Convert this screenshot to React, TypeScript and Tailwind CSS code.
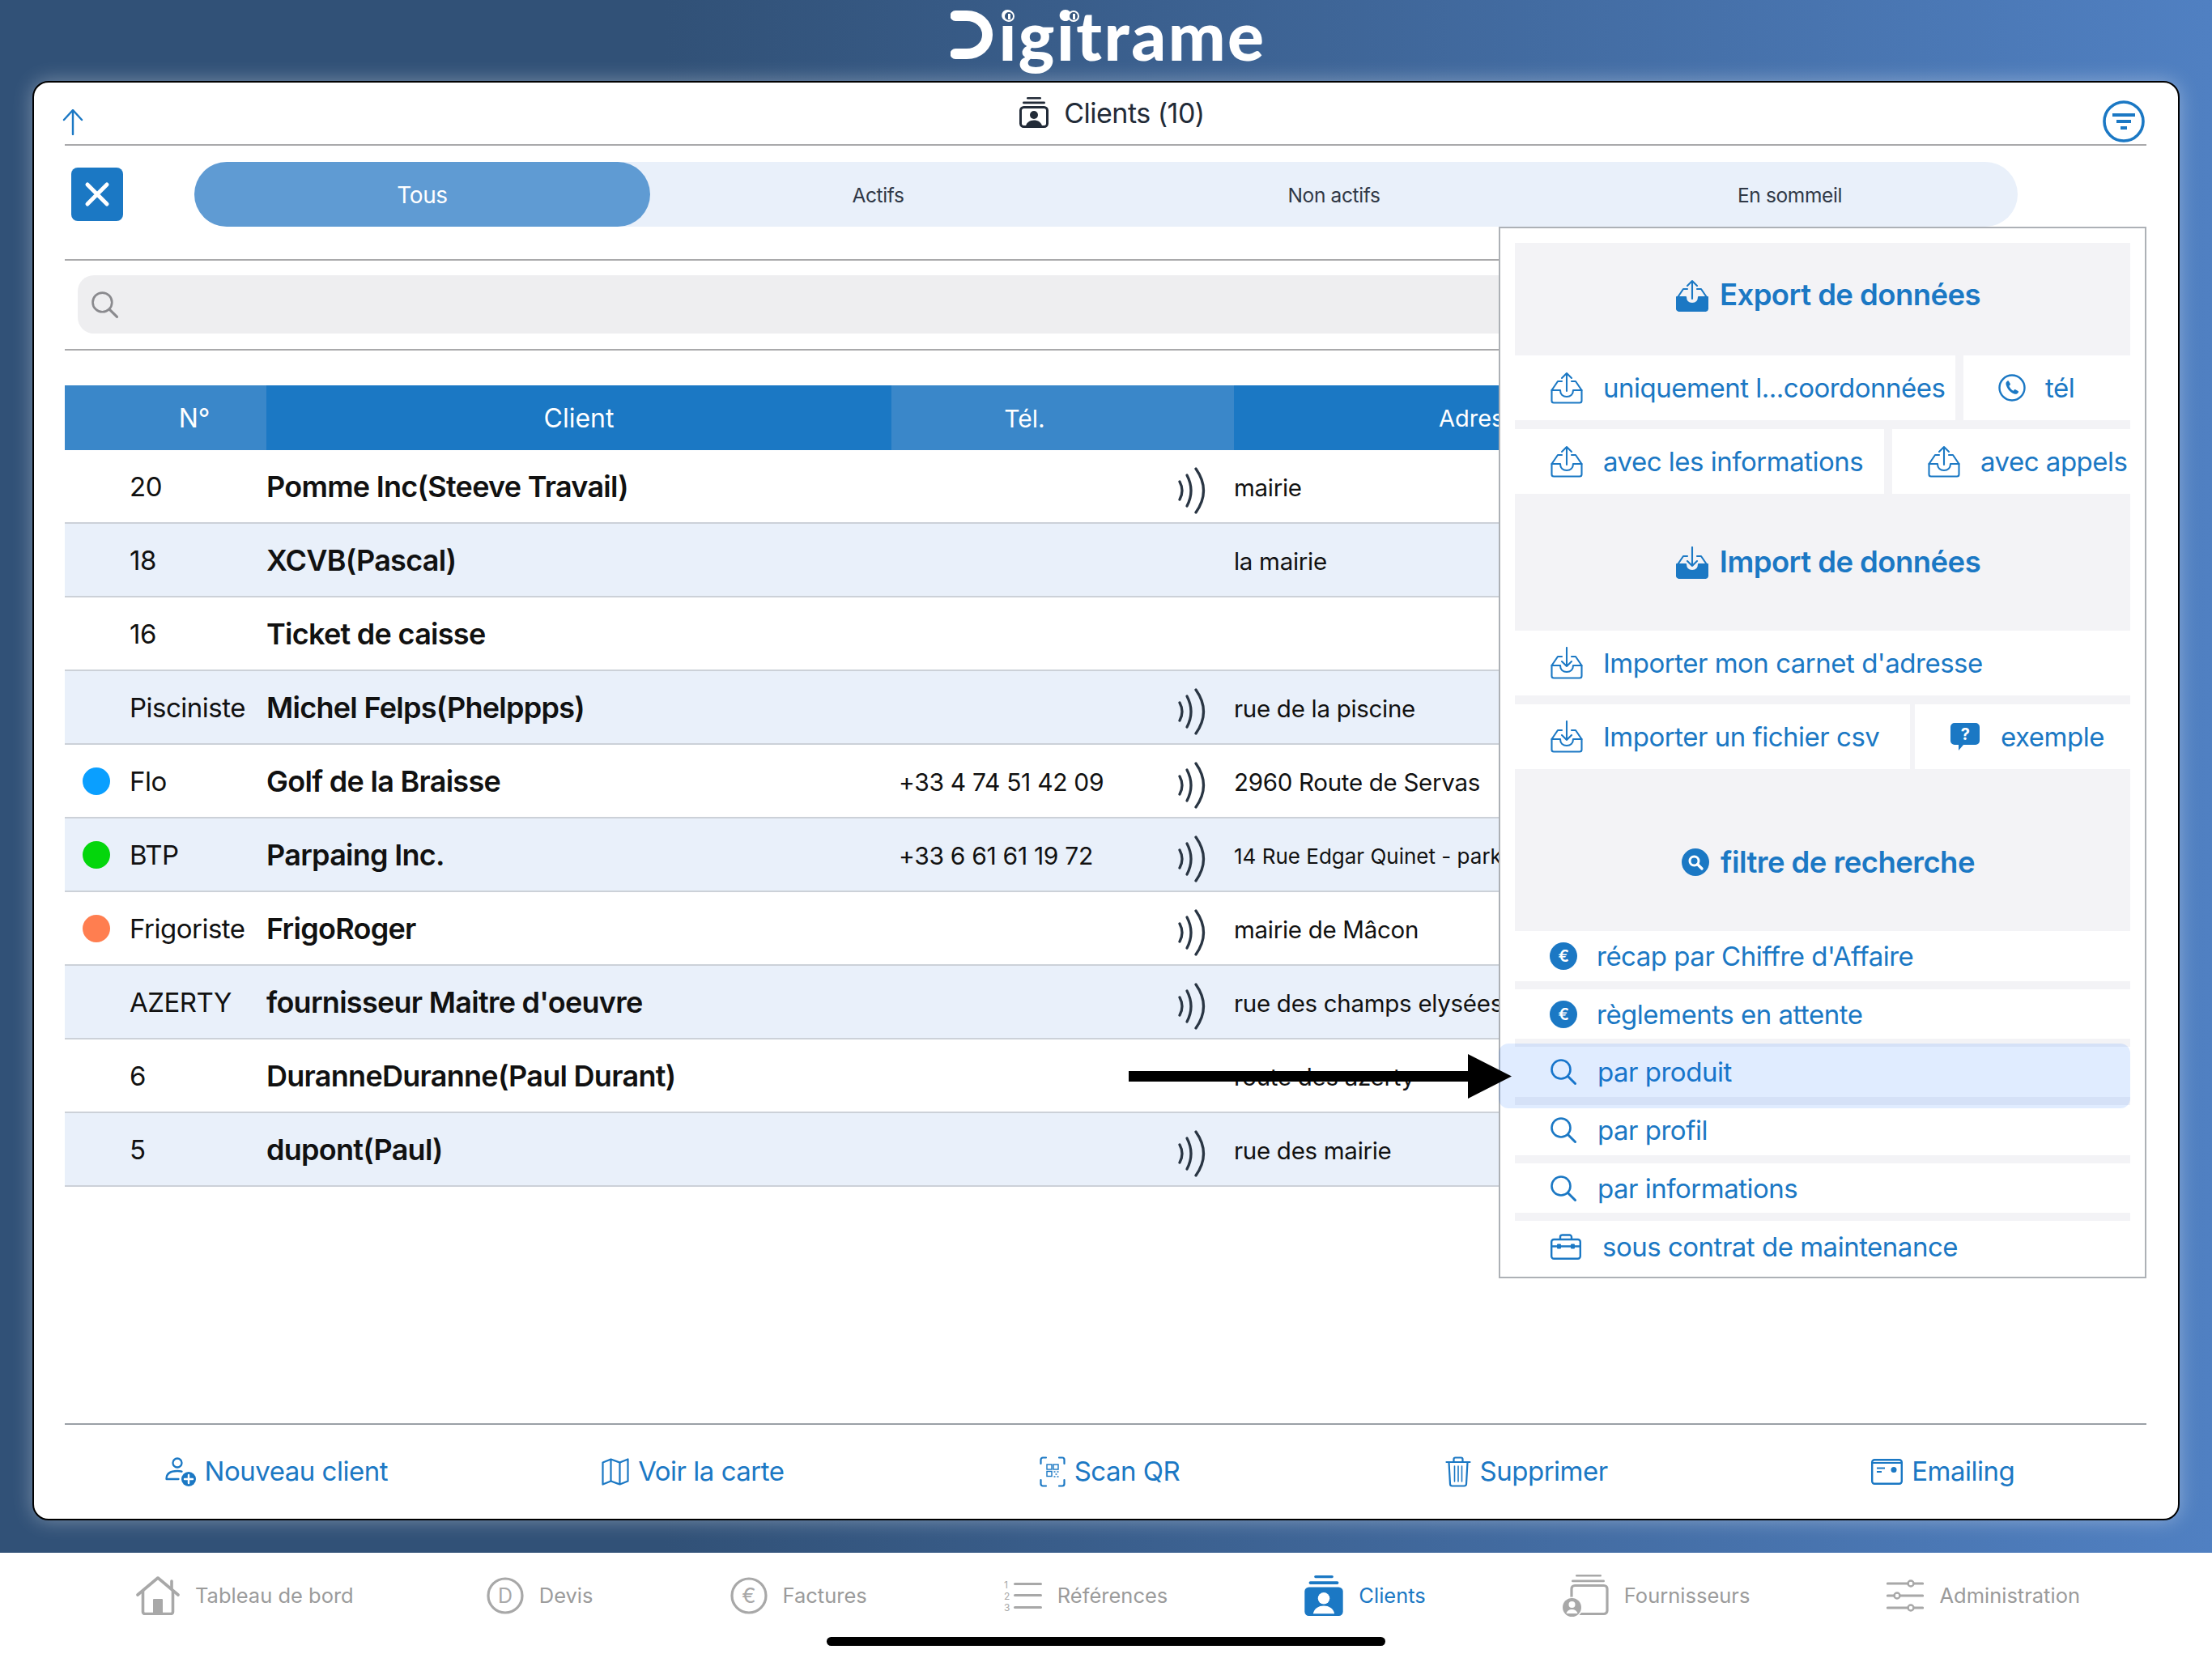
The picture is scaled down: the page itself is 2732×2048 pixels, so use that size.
import type { ReactNode } from "react"

// Small drawn icons, all take a className for size and use currentColor
function TrayIcon({ down, filled, className }: { down?: boolean; filled?: boolean; className?: string }) {
  return (
    <svg viewBox="0 0 40 40" className={className} fill="none" stroke="currentColor" strokeWidth="2.100" strokeLinejoin="round" strokeLinecap="round">
      {filled && <path d="M1 22h11c0 5 3.500 8 8 8s8-3 8-8h11v14a3 3 0 0 1-3 3H4a3 3 0 0 1-3-3z" fill="currentColor" />}
      <path d="M1.500 23 9 12h5M26 12h5l7.500 11" />
      {!filled && <path d="M1.500 23h10.500c0 5 3.500 8 8 8s8-3 8-8h10.500v13a2.500 2.500 0 0 1-2.500 2.500H4A2.500 2.500 0 0 1 1.500 36z" />}
      {down ? <path d="M20 1v23M14 18l6 6 6-6" /> : <path d="M20 24V2M14 8l6-6 6 6" />}
    </svg>
  )
}

function SearchGlass({ className }: { className?: string }) {
  return (
    <svg viewBox="0 0 32 32" className={className} fill="none" stroke="currentColor" strokeWidth="2.600" strokeLinecap="round">
      <circle cx="13" cy="13" r="11.500" />
      <path d="M21.500 21.500 30.500 30.500" strokeWidth="3" />
    </svg>
  )
}

function PhoneCircle({ className }: { className?: string }) {
  return (
    <svg viewBox="0 0 34 34" className={className} fill="none">
      <circle cx="17" cy="17" r="15.500" stroke="currentColor" strokeWidth="2.400" />
      <path d="M11.500 8.500c-1.800 1-2.500 2.800-1.800 5 1.500 5 5 9 10 11 2.200.8 4.200 0 5.200-2 .3-.6.100-1.200-.4-1.500l-3.200-1.800c-.5-.3-1.100-.2-1.500.3l-1 1.200c-2.500-1.200-4.500-3.500-5.400-6l1.200-1.100c.4-.4.500-1 .2-1.500l-1.800-3.200c-.3-.6-.9-.7-1.500-.4z" fill="currentColor" />
    </svg>
  )
}

function EuroBadge({ className }: { className?: string }) {
  return (
    <svg viewBox="0 0 34 34" className={className}>
      <circle cx="17" cy="17" r="17" fill="currentColor" />
      <text x="17" y="24" textAnchor="middle" fontSize="20" fontWeight="600" fontFamily="Inter, sans-serif" fill="#fff">€</text>
    </svg>
  )
}

function SearchBadge({ className }: { className?: string }) {
  return (
    <svg viewBox="0 0 34 34" className={className} fill="none">
      <circle cx="17" cy="17" r="17" fill="currentColor" />
      <circle cx="15.500" cy="15.500" r="5.500" stroke="#fff" strokeWidth="3" />
      <path d="M19.500 19.500 25 25" stroke="#fff" strokeWidth="3.400" strokeLinecap="round" />
    </svg>
  )
}

function HelpBubble({ className }: { className?: string }) {
  return (
    <svg viewBox="0 0 36 34" className={className}>
      <path d="M5 0h26a5 5 0 0 1 5 5v17a5 5 0 0 1-5 5H16l-6 7v-7H5a5 5 0 0 1-5-5V5a5 5 0 0 1 5-5z" fill="currentColor" />
      <text x="18" y="21" textAnchor="middle" fontSize="20" fontWeight="700" fontFamily="Inter, sans-serif" fill="#fff">?</text>
    </svg>
  )
}

function CaseIcon({ className }: { className?: string }) {
  return (
    <svg viewBox="0 0 38 32" className={className} fill="none" stroke="currentColor" strokeWidth="2.400">
      <rect x="1.200" y="7" width="35.600" height="23.800" rx="3" />
      <path d="M12 7V4a2.500 2.500 0 0 1 2.500-2.500h9A2.500 2.500 0 0 1 26 4v3M1.200 15.500h35.600" />
      <rect x="8" y="12.500" width="5" height="6" rx="1" fill="currentColor" stroke="none" />
      <rect x="25" y="12.500" width="5" height="6" rx="1" fill="currentColor" stroke="none" />
    </svg>
  )
}

function ClientsIcon({ filled, className }: { filled?: boolean; className?: string }) {
  return (
    <svg viewBox="0 0 36 38" className={className}>
      <rect x="9" y="0" width="18" height="2.400" rx="1.200" fill="currentColor" />
      <rect x="4" y="5.500" width="28" height="2.800" rx="1.400" fill="currentColor" />
      {filled ? (
        <>
          <rect x="0" y="11" width="36" height="27" rx="4" fill="currentColor" />
          <circle cx="18" cy="21.500" r="5.500" fill="#fff" />
          <path d="M8 36c1-5 5-7.500 10-7.500s9 2.500 10 7.500z" fill="#fff" />
        </>
      ) : (
        <>
          <rect x="1.500" y="12.500" width="33" height="24" rx="4" fill="none" stroke="currentColor" strokeWidth="3" />
          <circle cx="18" cy="22" r="5" fill="currentColor" />
          <path d="M7.500 37c1-6 5.500-8.500 10.500-8.500s9.500 2.500 10.500 8.500z" fill="currentColor" />
        </>
      )}
    </svg>
  )
}

function NfcIcon() {
  return (
    <svg viewBox="0 0 38 58" className="h-[58px] w-[38px]" fill="none" stroke="#2a3644" strokeWidth="3.300" strokeLinecap="round">
      <path d="M2 18q6 11 0 22" />
      <path d="M11 10q10 19 0 38" />
      <path d="M22 2q19 27 0 54" />
    </svg>
  )
}

// Tab bar icons
const tabIcons: Record<string, ReactNode> = {
  home: (
    <svg viewBox="0 0 54 48" className="h-[48px] w-[54px]" fill="none" stroke="currentColor" strokeWidth="3.600" strokeLinecap="round" strokeLinejoin="round">
      <path d="M2 23 27 2l25 21" />
      <path d="M44 15V6M8.500 18v26a2.500 2.500 0 0 0 2.500 2.500h32a2.500 2.500 0 0 0 2.500-2.500V18" />
      <rect x="21" y="28" width="12" height="18" rx="1" fill="currentColor" stroke="none" />
    </svg>
  ),
  devis: (
    <svg viewBox="0 0 46 46" className="h-[46px] w-[46px]" fill="none">
      <circle cx="23" cy="23" r="21" stroke="currentColor" strokeWidth="3.200" />
      <text x="23" y="32" textAnchor="middle" fontSize="25" fontFamily="Inter, sans-serif" fill="currentColor">D</text>
    </svg>
  ),
  factures: (
    <svg viewBox="0 0 46 46" className="h-[46px] w-[46px]" fill="none">
      <circle cx="23" cy="23" r="21" stroke="currentColor" strokeWidth="3.200" />
      <text x="23" y="32" textAnchor="middle" fontSize="26" fontFamily="Inter, sans-serif" fill="currentColor">€</text>
    </svg>
  ),
  refs: (
    <svg viewBox="0 0 47 40" className="h-[40px] w-[47px]" fill="currentColor">
      <text x="0" y="11" fontSize="12" fontFamily="Inter, sans-serif">1</text>
      <text x="0" y="25" fontSize="12" fontFamily="Inter, sans-serif">2</text>
      <text x="0" y="39" fontSize="12" fontFamily="Inter, sans-serif">3</text>
      <rect x="12" y="4" width="35" height="3" rx="1.500" />
      <rect x="12" y="18" width="35" height="3" rx="1.500" />
      <rect x="12" y="33" width="35" height="3" rx="1.500" />
    </svg>
  ),
  clients: <ClientsIcon filled className="h-[50px] w-[48px]" />,
  fournisseurs: (
    <svg viewBox="0 0 57 54" className="h-[54px] w-[57px]" fill="none">
      <rect x="16" y="1" width="32" height="2.600" rx="1.300" fill="currentColor" />
      <rect x="11" y="7.500" width="41" height="2.800" rx="1.400" fill="currentColor" />
      <rect x="11" y="14.500" width="44" height="35" rx="4" stroke="currentColor" strokeWidth="3.200" />
      <circle cx="11.500" cy="41.500" r="13" fill="#fff" />
      <circle cx="11.500" cy="41.500" r="11.500" fill="currentColor" />
      <circle cx="11.500" cy="38" r="4" fill="#fff" />
      <path d="M4.500 49c1-3.500 3.500-5 7-5s6 1.500 7 5z" fill="#fff" />
    </svg>
  ),
  admin: (
    <svg viewBox="0 0 46 40" className="h-[40px] w-[46px]" fill="none" stroke="currentColor" strokeWidth="3.200" strokeLinecap="round">
      <path d="M1.500 5h25M34 5h10.500M1.500 20h8M17 20h27.500M1.500 35h25M34 35h10.500" />
      <circle cx="30" cy="5" r="3.500" strokeWidth="2.400" />
      <circle cx="13" cy="20" r="3.500" strokeWidth="2.400" />
      <circle cx="30" cy="35" r="3.500" strokeWidth="2.400" />
    </svg>
  ),
}

const tabs = [
  { label: "Tableau de bord", icon: "home" },
  { label: "Devis", icon: "devis" },
  { label: "Factures", icon: "factures" },
  { label: "Références", icon: "refs" },
  { label: "Clients", icon: "clients", active: true },
  { label: "Fournisseurs", icon: "fournisseurs" },
  { label: "Administration", icon: "admin" },
]

// Bottom actions of the card
const actions: { label: string; icon: ReactNode }[] = [
  {
    label: "Nouveau client",
    icon: (
      <svg viewBox="0 0 38 36" className="h-[36px] w-[38px]" fill="none" stroke="currentColor" strokeWidth="2.300" strokeLinecap="round">
        <circle cx="15" cy="7" r="5.500" />
        <path d="M1.500 27c0-7 5.500-10 13.500-10 2 0 4 .2 5.500.7M1.500 27h15" />
        <circle cx="29" cy="27" r="9" fill="currentColor" stroke="none" />
        <path d="M29 22v10M24 27h10" stroke="#fff" strokeWidth="2.400" />
      </svg>
    ),
  },
  {
    label: "Voir la carte",
    icon: (
      <svg viewBox="0 0 34 34" className="h-[34px] w-[34px]" fill="none" stroke="currentColor" strokeWidth="2.200" strokeLinejoin="round">
        <path d="M1.500 5.500 11.500 1.500 22.500 5.500 32.500 1.500V28.500L22.500 32.500 11.500 28.500 1.500 32.500z" />
        <path d="M11.500 1.500v27M22.500 5.500v27" />
      </svg>
    ),
  },
  {
    label: "Scan QR",
    icon: (
      <svg viewBox="0 0 32 38" className="h-[38px] w-[32px]" fill="none" stroke="currentColor" strokeWidth="2.200" strokeLinecap="round">
        <path d="M8 1.500H4A2.500 2.500 0 0 0 1.500 4v5M24 1.500h4A2.500 2.500 0 0 1 30.500 4v5M8 36.500H4A2.500 2.500 0 0 1 1.500 34v-5M24 36.500h4a2.500 2.500 0 0 0 2.500-2.500v-5" />
        <g strokeWidth="1.400">
          <rect x="9" y="10" width="6" height="6" />
          <rect x="17" y="10" width="6" height="6" />
          <rect x="9" y="18.500" width="6" height="6" />
          <path d="M18 19h1M22 19h1M20 22h1M18 25h1M22 25h1" />
        </g>
      </svg>
    ),
  },
  {
    label: "Supprimer",
    icon: (
      <svg viewBox="0 0 32 38" className="h-[38px] w-[32px]" fill="none" stroke="currentColor" strokeWidth="2.200" strokeLinecap="round" strokeLinejoin="round">
        <path d="M1.500 7h29M10.500 7V3.500a2 2 0 0 1 2-2h7a2 2 0 0 1 2 2V7" />
        <path d="M4.500 7l1.500 27a2.500 2.500 0 0 0 2.500 2.500h15a2.500 2.500 0 0 0 2.500-2.500L27.500 7" />
        <path d="M11.500 12v19M16 12v19M20.500 12v19" strokeWidth="1.600" />
      </svg>
    ),
  },
  {
    label: "Emailing",
    icon: (
      <svg viewBox="0 0 39 32" className="h-[32px] w-[39px]" fill="none" stroke="currentColor" strokeWidth="2.400">
        <rect x="1.200" y="1.200" width="36.600" height="29.600" rx="3" />
        <path d="M1.200 5h36.600" strokeWidth="1.800" />
        <path d="M7 11.500h10M7 16h6" strokeWidth="2" />
        <circle cx="28" cy="13.500" r="3.500" fill="currentColor" stroke="none" />
      </svg>
    ),
  },
]

const rows = [
  { tag: "20", name: "Pomme Inc(Steeve Travail)", nfc: true, addr: "mairie" },
  { tag: "18", name: "XCVB(Pascal)", addr: "la mairie" },
  { tag: "16", name: "Ticket de caisse" },
  { tag: "Pisciniste", name: "Michel Felps(Phelppps)", nfc: true, addr: "rue de la piscine" },
  { tag: "Flo", dot: "bg-[#0a9fff]", name: "Golf de la Braisse", tel: "+33 4 74 51 42 09", nfc: true, addr: "2960 Route de Servas" },
  { tag: "BTP", dot: "bg-[#04d60c]", name: "Parpaing Inc.", tel: "+33 6 61 61 19 72", nfc: true, addr: "14 Rue Edgar Quinet - parking", small: true },
  { tag: "Frigoriste", dot: "bg-[#ff7e50]", name: "FrigoRoger", nfc: true, addr: "mairie de Mâcon" },
  { tag: "AZERTY", name: "fournisseur Maitre d'oeuvre", nfc: true, addr: "rue des champs elysées" },
  { tag: "6", name: "DuranneDuranne(Paul Durant)", addr: "route des azerty" },
  { tag: "5", name: "dupont(Paul)", nfc: true, addr: "rue des mairie" },
]

const segments = ["Tous", "Actifs", "Non actifs", "En sommeil"]

function MenuTitle({ icon, children, className }: { icon: ReactNode; children: ReactNode; className: string }) {
  return (
    <div className={`flex items-center justify-center gap-[14px] pl-[14px] text-[36.500px] font-semibold tracking-[-0.015em] ${className}`}>
      {icon}
      <span>{children}</span>
    </div>
  )
}

function MenuItem({ icon, children, className }: { icon: ReactNode; children: ReactNode; className: string }) {
  return (
    <div className={`flex items-center bg-white text-[33px] tracking-[-0.015em] whitespace-nowrap ${className}`}>
      {icon}
      <span className="pt-[2px]">{children}</span>
    </div>
  )
}

function ExportMenu() {
  return (
    <div className="absolute left-[1809px] top-[178px] w-[800px] border-2 border-[#adb1b6] bg-white p-[18px] pb-[6px] text-[#1b78c4]">
      <div className="flex flex-col bg-[#f3f3f6]">
        <MenuTitle className="h-[139px] pb-[10px]" icon={<TrayIcon filled className="h-[40px] w-[40px]" />}>Export de données</MenuTitle>
        <div className="flex h-[80px] justify-between">
          <MenuItem className="w-[544px] gap-[25px] pl-[44px]" icon={<TrayIcon className="h-[40px] w-[40px]" />}>uniquement l...coordonnées</MenuItem>
          <MenuItem className="w-[206px] gap-[24px] pl-[43px]" icon={<PhoneCircle className="h-[34px] w-[34px]" />}>tél</MenuItem>
        </div>
        <div className="mt-[11px] flex h-[80px] justify-between">
          <MenuItem className="w-[456px] gap-[25px] pl-[44px]" icon={<TrayIcon className="h-[40px] w-[40px]" />}>avec les informations</MenuItem>
          <MenuItem className="w-[294px] gap-[25px] pl-[44px]" icon={<TrayIcon className="h-[40px] w-[40px]" />}>avec appels</MenuItem>
        </div>
        <MenuTitle className="h-[169px]" icon={<TrayIcon filled down className="h-[40px] w-[40px]" />}>Import de données</MenuTitle>
        <MenuItem className="h-[80px] gap-[25px] pl-[44px]" icon={<TrayIcon down className="h-[40px] w-[40px]" />}>Importer mon carnet d'adresse</MenuItem>
        <div className="mt-[11px] flex h-[80px] justify-between">
          <MenuItem className="w-[488px] gap-[25px] pl-[44px]" icon={<TrayIcon down className="h-[40px] w-[40px]" />}>Importer un fichier csv</MenuItem>
          <MenuItem className="w-[266px] gap-[26px] pl-[44px]" icon={<HelpBubble className="h-[34px] w-[36px]" />}>exemple</MenuItem>
        </div>
        <MenuTitle className="h-[200px] gap-[13px] pt-[30px]" icon={<SearchBadge className="h-[34px] w-[34px]" />}>filtre de recherche</MenuTitle>
        <MenuItem className="h-[62px] gap-[24px] pl-[43px]" icon={<EuroBadge className="h-[34px] w-[34px]" />}>récap par Chiffre d'Affaire</MenuItem>
        <MenuItem className="mt-[10px] h-[61px] gap-[24px] pl-[43px]" icon={<EuroBadge className="h-[34px] w-[34px]" />}>règlements en attente</MenuItem>
        <MenuItem className="mt-[10px] h-[62px] gap-[26px] pl-[44px]" icon={<SearchGlass className="h-[32px] w-[32px]" />}>par produit</MenuItem>
        <MenuItem className="mt-[10px] h-[62px] gap-[26px] pl-[44px]" icon={<SearchGlass className="h-[32px] w-[32px]" />}>par profil</MenuItem>
        <MenuItem className="mt-[10px] h-[61px] gap-[26px] pl-[44px]" icon={<SearchGlass className="h-[32px] w-[32px]" />}>par informations</MenuItem>
        <MenuItem className="mt-[10px] h-[63px] gap-[26px] pl-[44px]" icon={<CaseIcon className="h-[32px] w-[38px]" />}>sous contrat de maintenance</MenuItem>
      </div>
      {/* pressed row highlight */}
      <div className="absolute left-[-2px] top-[1007px] h-[80px] w-[780px] rounded-[12px] bg-[rgba(0,100,255,0.12)]" />
    </div>
  )
}

function LogoDot({ className }: { className: string }) {
  return (
    <span className={`absolute top-[13px] flex h-[14px] w-[14px] items-center justify-center rounded-full border-2 border-white bg-[#35557d] ${className}`}>
      <span className="h-[7px] w-[3px] bg-white" />
    </span>
  )
}

export default function App() {
  return (
    <div className="flex h-[2048px] w-[2732px] flex-col overflow-hidden bg-white font-[Inter,sans-serif]">
      <div className="flex h-[1918px] flex-col bg-[linear-gradient(90deg,#315177_30%,#5080c2_100%)] px-[40px]">
        {/* Logo */}
        <div className="flex h-[100px] items-start justify-center text-white">
          <div className="relative ml-[6px] flex items-start">
            <svg viewBox="0 0 52 60" className="mt-[13px] h-[60px] w-[52px]" fill="none" stroke="currentColor" strokeWidth="13" strokeLinecap="round">
              <path d="M6 6.500h14c14 0 25.500 10 25.500 23.500S34 53.500 20 53.500H6" />
            </svg>
            <span className="ml-[7px] font-[Lato,sans-serif] text-[84px] leading-[86px] font-black tracking-[0.03em]">igitrame</span>
            <LogoDot className="left-[65px]" />
            <LogoDot className="left-[145px]" />
          </div>
        </div>

        {/* Main card */}
        <div className="relative flex h-[1778px] flex-col rounded-[20px] border-2 border-black bg-white pr-[39px] pl-[38px] shadow-[0_0_24px_rgba(255,255,255,0.35)]">
          <div className="relative flex h-[78px] shrink-0 items-center justify-center border-b-2 border-[#a9a9ab] text-[#222b38]">
            <svg viewBox="0 0 28 32" className="absolute left-[-4px] top-[33px] h-[32px] w-[28px] text-[#1b78c4]" fill="none" stroke="currentColor" strokeWidth="2.400" strokeLinecap="round">
              <path d="M14 31V2M3 13 14 1l11 12" />
            </svg>
            <div className="ml-[16px] flex items-center gap-[19px] pb-[2px] text-[34px] tracking-[-0.015em]">
              <ClientsIcon className="h-[38px] w-[36px]" />
              <span>Clients (10)</span>
            </div>
            <svg viewBox="0 0 52 52" className="absolute right-[2px] top-[22px] h-[52px] w-[52px] text-[#1b78c4]" fill="none" stroke="currentColor" strokeWidth="3.600">
              <circle cx="26" cy="26" r="24" />
              <path d="M12 18h28M17 26h18M22 34h8" strokeWidth="4" />
            </svg>
          </div>

          <div className="mt-[20px] flex h-[80px] shrink-0 items-center">
            <div className="ml-[8px] flex h-[66px] w-[64px] items-center justify-center rounded-[8px] bg-[#1b78c4] text-white">
              <svg viewBox="0 0 32 32" className="h-[32px] w-[32px]" fill="none" stroke="currentColor" strokeWidth="5" strokeLinecap="round">
                <path d="M4 4l24 24M28 4 4 28" />
              </svg>
            </div>
            <div className="ml-[88px] grid h-[80px] w-[2252px] grid-cols-4 rounded-[40px] bg-[#e9f0fa] text-[24.500px] tracking-[-0.015em] text-[#303846]">
              {segments.map((s, i) => (
                <div key={s} className={i === 0 ? "flex items-center justify-center rounded-[40px] bg-[#5f9bd3] pt-[2px] text-[28px] text-white" : "flex items-center justify-center pt-[3px]"}>
                  {s}
                </div>
              ))}
            </div>
          </div>

          <div className="mt-[40px] shrink-0 border-b-2 border-[#a9a9ab]" />
          <div className="mt-[18px] ml-[16px] flex h-[72px] shrink-0 items-center rounded-[20px] bg-[#eeeef0] pl-[17px] text-[#8a8a8e]">
            <SearchGlass className="h-[33px] w-[33px]" />
          </div>
          <div className="mt-[19px] shrink-0 border-b-2 border-[#a9a9ab]" />

          {/* Table */}
          <div className="mt-[43px] flex h-[80px] shrink-0 items-center text-[32px] text-white">
            <div className="flex h-full w-[249px] items-center justify-center bg-[#3a87c9] pt-[2px] pl-[71px]">N°</div>
            <div className="flex h-full w-[772px] items-center justify-center bg-[#1b78c4] pt-[2px]">Client</div>
            <div className="flex h-full w-[423px] items-center justify-center bg-[#3a87c9] pt-[2px] pr-[94px] text-[30px]">Tél.</div>
            <div className="flex h-full flex-1 items-center bg-[#1b78c4] pt-[2px] pl-[253px] text-[29px]">Adresse</div>
          </div>
          <div className="shrink-0">
            {rows.map((r, i) => (
              <div key={r.name} className={i % 2 === 1 ? "flex h-[91px] items-center border-b-2 border-[#ccd1d8] bg-[#e9f0fa] text-[#111]" : "flex h-[91px] items-center border-b-2 border-[#ccd1d8] bg-white text-[#111]"}>
                <div className="flex w-[80px] shrink-0 pl-[22px]">
                  {r.dot && <span className={`h-[34px] w-[34px] rounded-full ${r.dot}`} />}
                </div>
                <div className="w-[169px] shrink-0 pt-[2px] text-[33px] tracking-[-0.015em]">{r.tag}</div>
                <div className="w-[772px] shrink-0 pt-[1px] text-[36px] font-semibold tracking-[-0.02em]">{r.name}</div>
                <div className="w-[354px] shrink-0 pt-[3px] pl-[9px] text-[30px] tracking-[-0.01em]">{r.tel}</div>
                <div className="flex w-[69px] shrink-0 pt-[10px]">{r.nfc && <NfcIcon />}</div>
                <div className={r.small ? "pt-[3px] text-[26px] whitespace-nowrap" : "pt-[3px] text-[29.500px] tracking-[-0.01em] whitespace-nowrap"}>{r.addr}</div>
              </div>
            ))}
          </div>

          {/* Bottom actions */}
          <div className="mt-auto shrink-0 border-b-2 border-[#9aa0a6]" />
          <div className="mr-[-6px] ml-[4px] grid h-[116px] shrink-0 grid-cols-5 text-[33px] tracking-[-0.015em] text-[#1b78c4]">
            {actions.map((a) => (
              <div key={a.label} className="flex items-center justify-center gap-[11px]">
                {a.icon}
                <span>{a.label}</span>
              </div>
            ))}
          </div>

          <ExportMenu />

          {/* Black annotation arrow */}
          <svg viewBox="0 0 473 55" className="absolute left-[1352px] top-[1200px] h-[55px] w-[473px]" fill="#000">
            <path d="M0 21h419V0l54 27.500L419 55V34H0z" />
          </svg>
        </div>
      </div>

      {/* Tab bar */}
      <div className="relative flex h-[130px] items-start justify-between pt-[26px] pr-[163px] pl-[168px] text-[25.500px] text-[#9b9b9b]">
        {tabs.map((t) => (
          <div key={t.label} className={t.active ? "flex h-[54px] items-center gap-[19px] text-[#1b78c4]" : "flex h-[54px] items-center gap-[19px] first:mr-[-5px]"}>
            <span className={t.active ? "text-[#1b78c4]" : "text-[#a8a8a8]"}>{tabIcons[t.icon]}</span>
            <span>{t.label}</span>
          </div>
        ))}
        <div className="absolute bottom-[15px] left-[1021px] h-[11px] w-[690px] rounded-full bg-black" />
      </div>
    </div>
  )
}
